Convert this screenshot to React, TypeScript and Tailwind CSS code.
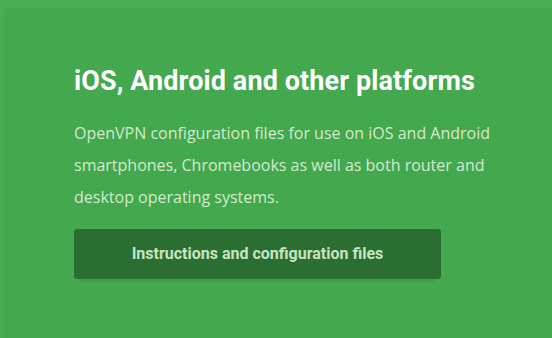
export default function App() {
  return (
    <div className="h-[338px] w-[552px] overflow-hidden bg-[#45af52] pl-1 pt-2">
      <div className="h-full w-full rounded-tl-[5px] bg-[#43a84e] pl-[70px] pt-[58px]">
        <h2 className="font-['Roboto',sans-serif] text-[27px] font-bold leading-[30px] tracking-[0.1px] text-white">
          iOS, Android and other platforms
        </h2>
        <p className="mt-[21px] w-[440px] font-['Open_Sans',sans-serif] text-[16px] leading-[32px] text-[#d2ebcb]">
          OpenVPN configuration files for use on iOS and Android smartphones, Chromebooks as well as both router and desktop operating systems.
        </p>
        <button className="mt-[16px] flex h-[50px] w-[367px] items-center justify-center rounded-[3px] bg-[#2a6e32] font-['Roboto',sans-serif] text-[16px] font-bold text-[#c6e4c0] shadow-[0_9px_0_-6px_rgba(0,0,0,0.05)]">
          Instructions and configuration files
        </button>
      </div>
    </div>
  );
}
